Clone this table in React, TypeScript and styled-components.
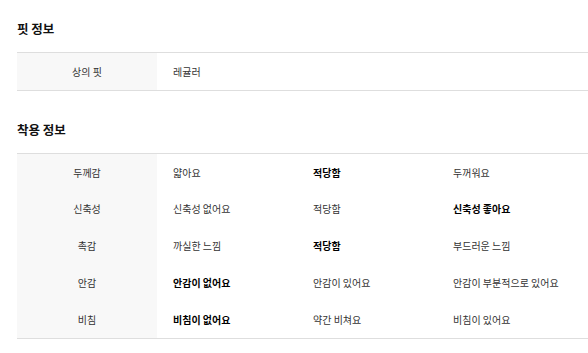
import React from "react";
import styled, { createGlobalStyle } from "styled-components";

const Global = createGlobalStyle`
  html, body { margin: 0; padding: 0; background: #fff; overflow: hidden; }
  body { font-family: "Noto Sans CJK KR", "Noto Sans", sans-serif; }
`;

const Page = styled.div`
  padding: 19px 0 0 17px;
  display: flex;
  flex-direction: column;
  gap: 29px;
`;

const Section = styled.section`
  display: flex;
  flex-direction: column;
  gap: 13px;
`;

const Title = styled.h3`
  margin: 0;
  font-size: 12.5px;
  line-height: 20px;
  font-weight: 700;
  color: #111;
`;

const Table = styled.div`
  border-top: 1px solid #dedede;
  border-bottom: 1px solid #dedede;
  display: flex;
  flex-direction: column;
`;

const Row = styled.div`
  display: flex;
  height: 36.8px;
  align-items: stretch;
`;

const Head = styled.div`
  width: 140px;
  flex: none;
  background: #f8f8f8;
  display: flex;
  align-items: center;
  justify-content: center;
  font-size: 10px;
  color: #333;
`;

const Cell = styled.div<{ $bold?: boolean }>`
  width: 140px;
  flex: none;
  box-sizing: border-box;
  padding-left: 16px;
  display: flex;
  align-items: center;
  font-size: 10px;
  white-space: nowrap;
  color: ${(p) => (p.$bold ? "#000" : "#333")};
  font-weight: ${(p) => (p.$bold ? 700 : 400)};
`;

const Filler = styled.div`
  flex: 1;
`;

type Opt = { t: string; b?: boolean };

const fit: { k: string; v: Opt[] }[] = [{ k: "상의 핏", v: [{ t: "레귤러" }] }];

const wear: { k: string; v: Opt[] }[] = [
  { k: "두께감", v: [{ t: "얇아요" }, { t: "적당함", b: true }, { t: "두꺼워요" }] },
  { k: "신축성", v: [{ t: "신축성 없어요" }, { t: "적당함" }, { t: "신축성 좋아요", b: true }] },
  { k: "촉감", v: [{ t: "까실한 느낌" }, { t: "적당함", b: true }, { t: "부드러운 느낌" }] },
  { k: "안감", v: [{ t: "안감이 없어요", b: true }, { t: "안감이 있어요" }, { t: "안감이 부분적으로 있어요" }] },
  { k: "비침", v: [{ t: "비침이 없어요", b: true }, { t: "약간 비쳐요" }, { t: "비침이 있어요" }] },
];

const InfoTable = ({ rows }: { rows: { k: string; v: Opt[] }[] }) => (
  <Table>
    {rows.map((r) => (
      <Row key={r.k}>
        <Head>{r.k}</Head>
        {r.v.map((o, i) => (
          <Cell key={i} $bold={o.b}>
            {o.t}
          </Cell>
        ))}
        <Filler />
      </Row>
    ))}
  </Table>
);

export default function App() {
  return (
    <>
      <Global />
      <Page>
        <Section>
          <Title>핏 정보</Title>
          <InfoTable rows={fit} />
        </Section>
        <Section>
          <Title>착용 정보</Title>
          <InfoTable rows={wear} />
        </Section>
      </Page>
    </>
  );
}
